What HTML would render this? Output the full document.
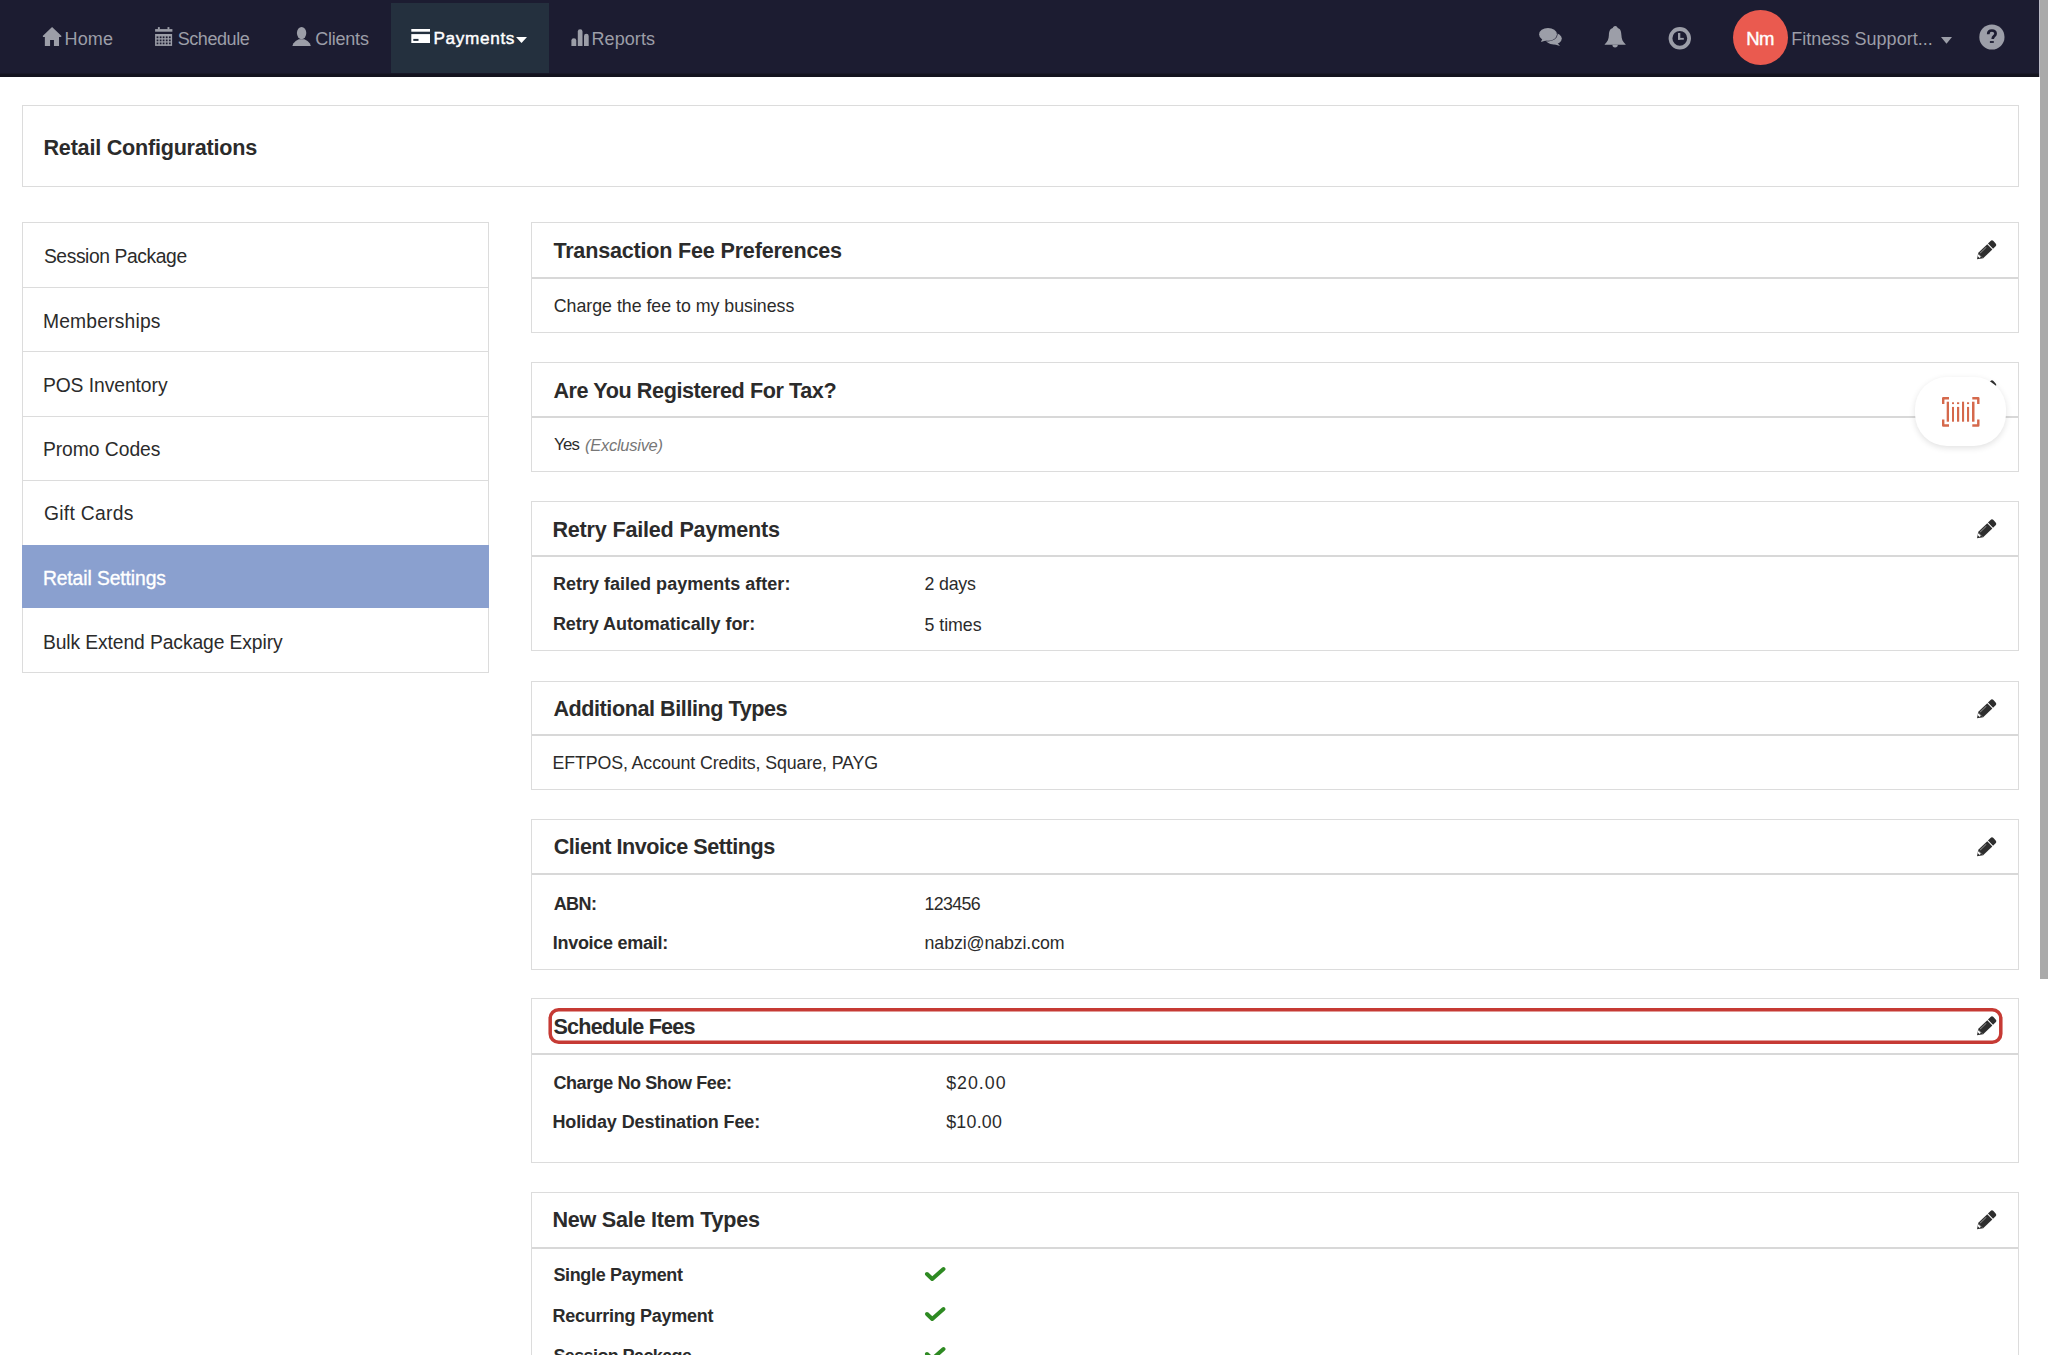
<!DOCTYPE html>
<html>
<head>
<meta charset="utf-8">
<style>
html,body{margin:0;padding:0;}
body{width:2048px;height:1355px;overflow:hidden;position:relative;background:#fff;font-family:"Liberation Sans",sans-serif;color:#2b2b2b;}
.t{position:absolute;white-space:nowrap;}
.r{position:absolute;}
svg{position:absolute;overflow:visible;}
</style>
</head>
<body>
<div class="r" style="left:0px;top:0px;width:2040px;height:77px;background:#1c1c31;"></div>
<div class="r" style="left:0px;top:73px;width:2040px;height:1px;background:#181828;"></div>
<div class="r" style="left:0px;top:74px;width:2040px;height:3px;background:#13131e;"></div>
<div class="r" style="left:391px;top:3px;width:158px;height:70px;background:#24303e;"></div>
<svg style="left:42px;top:26px" width="20" height="20" viewBox="0 0 20 20"><path d="M10.06 0.9 L19.5 10.1 L19.1 11 L17.03 11 L17.03 19.9 L11.94 19.9 L11.94 13.93 L8.07 13.93 L8.07 19.9 L2.86 19.9 L2.86 11 L1.1 11 L0.7 10.1 Z" fill="#9c9ea8"/></svg>
<svg style="left:155px;top:27px" width="18" height="19" viewBox="0 0 18 19"><rect x="0.1" y="2.1" width="17.3" height="2.6" fill="#9c9ea8"/><rect x="2.9" y="0.1" width="1.9" height="2.3" fill="#9c9ea8"/><rect x="12.5" y="0.1" width="1.9" height="2.3" fill="#9c9ea8"/><rect x="0.1" y="7" width="17" height="11.9" fill="#9c9ea8"/><rect x="1.6" y="9.4" width="1.8" height="1.8" fill="#1c1c31"/><rect x="1.6" y="12.5" width="1.8" height="1.8" fill="#1c1c31"/><rect x="1.6" y="15.5" width="1.8" height="1.8" fill="#1c1c31"/><rect x="4.7" y="9.4" width="1.8" height="1.8" fill="#1c1c31"/><rect x="4.7" y="12.5" width="1.8" height="1.8" fill="#1c1c31"/><rect x="4.7" y="15.5" width="1.8" height="1.8" fill="#1c1c31"/><rect x="7.7" y="9.4" width="1.8" height="1.8" fill="#1c1c31"/><rect x="7.7" y="12.5" width="1.8" height="1.8" fill="#1c1c31"/><rect x="7.7" y="15.5" width="1.8" height="1.8" fill="#1c1c31"/><rect x="10.8" y="9.4" width="1.8" height="1.8" fill="#1c1c31"/><rect x="10.8" y="12.5" width="1.8" height="1.8" fill="#1c1c31"/><rect x="10.8" y="15.5" width="1.8" height="1.8" fill="#1c1c31"/><rect x="13.9" y="9.4" width="1.8" height="1.8" fill="#1c1c31"/><rect x="13.9" y="12.5" width="1.8" height="1.8" fill="#1c1c31"/><rect x="13.9" y="15.5" width="1.8" height="1.8" fill="#1c1c31"/></svg>
<svg style="left:292px;top:26px" width="20" height="20" viewBox="0 0 20 20"><ellipse cx="9.6" cy="7.1" rx="4.7" ry="6.1" fill="#9c9ea8"/><path d="M0.4 19.9 L1.3 17.6 Q3.3 14.6 6.8 13.3 L12.4 13.3 Q15.9 14.6 17.9 17.6 L18.8 19.9 Z" fill="#9c9ea8"/></svg>
<svg style="left:411px;top:29px" width="19" height="14" viewBox="0 0 19 14"><rect x="0.3" y="0" width="18.7" height="2.7" fill="#fff"/><rect x="0.3" y="5.1" width="18.7" height="8.9" fill="#fff"/><rect x="2.3" y="9.9" width="5.2" height="2" fill="#24303e"/></svg>
<svg style="left:516px;top:37.3px" width="11" height="6" viewBox="0 0 11 6"><path d="M0 0 L11 0 L5.5 6 Z" fill="#fff"/></svg>
<svg style="left:571px;top:29px" width="18" height="17" viewBox="0 0 18 17"><path d="M0.4 16.9 L0.4 11.6 A2.45 2.45 0 0 1 5.3 11.6 L5.3 16.9 Z" fill="#9c9ea8"/><path d="M6.8 16.9 L6.8 2.5 A2.35 2.35 0 0 1 11.5 2.5 L11.5 16.9 Z" fill="#9c9ea8"/><path d="M13 16.9 L13 7.1 A2.35 2.35 0 0 1 17.7 7.1 L17.7 16.9 Z" fill="#9c9ea8"/></svg>
<svg style="left:1538px;top:27px" width="25" height="20" viewBox="0 0 25 20"><ellipse cx="15.6" cy="11.6" rx="8.2" ry="5.9" fill="#9c9ea8"/><path d="M19 15.5 L22 18.9 L14.5 16.8 Z" fill="#9c9ea8"/><ellipse cx="10" cy="7.4" rx="9.6" ry="7" fill="#1c1c31"/><ellipse cx="10" cy="7.4" rx="8.9" ry="6.4" fill="#9c9ea8"/><path d="M4.2 12 L3 14.9 L8.6 13.3 Z" fill="#9c9ea8"/></svg>
<svg style="left:1604px;top:25px" width="22" height="24" viewBox="0 0 22 24"><path d="M11.3 1 C12.8 1 13.4 2.2 13.7 3 C16.8 3.9 17.3 7 17.4 10 C17.6 14 18.5 16.6 21.7 19.4 L21.7 19.8 L0.6 19.8 L0.6 19.4 C3.8 16.6 4.7 14 4.9 10 C5 7 5.6 3.9 8.8 3 C9.1 2.2 9.7 1 11.3 1 Z" fill="#9c9ea8"/><path d="M8.4 19.8 A2.7 2.7 0 0 0 13.8 19.8 Z" fill="#9c9ea8"/></svg>
<svg style="left:1668px;top:26px" width="24" height="25" viewBox="0 0 24 25"><circle cx="11.8" cy="12.3" r="9.3" fill="none" stroke="#9c9ea8" stroke-width="3.8"/><rect x="10" y="7" width="2.3" height="6.7" fill="#9c9ea8"/><rect x="10" y="11.9" width="5.8" height="1.8" fill="#9c9ea8"/></svg>
<div class="r" style="left:1733px;top:10px;width:55px;height:55px;border-radius:50%;background:#ea5a4f;"></div>
<svg style="left:1940.5px;top:36.5px" width="11" height="7" viewBox="0 0 11 7"><path d="M0 0 L11 0 L5.5 6.7 Z" fill="#9c9ea8"/></svg>
<svg style="left:1979px;top:24px" width="26" height="26" viewBox="0 0 26 26"><circle cx="12.9" cy="13" r="12.6" fill="#9c9ea8"/><path d="M9.2 10.2 C9.2 7.6 11 6.5 12.9 6.5 C15.1 6.5 16.6 7.8 16.6 9.7 C16.6 12 13.7 12.2 13.7 14.9" fill="none" stroke="#1c1c31" stroke-width="2.7"/><rect x="10.9" y="17.1" width="3.9" height="1.8" fill="#1c1c31"/></svg>
<div class="r" style="left:2040px;top:0px;width:8px;height:1355px;background:#ffffff;"></div>
<div class="r" style="left:2040px;top:0px;width:8px;height:979px;background:#aaaaaa;"></div>
<div class="r" style="left:2039px;top:0px;width:1px;height:77px;background:#b8b8c4;"></div>
<div class="r" style="left:22px;top:105px;width:1997px;height:82px;border:1px solid #dcdcdc;box-sizing:border-box;"></div>
<div class="r" style="left:22px;top:222px;width:467px;height:451px;border:1px solid #dcdcdc;box-sizing:border-box;"></div>
<div class="r" style="left:22px;top:287px;width:467px;height:1px;background:#dcdcdc;"></div>
<div class="r" style="left:22px;top:351px;width:467px;height:1px;background:#dcdcdc;"></div>
<div class="r" style="left:22px;top:416px;width:467px;height:1px;background:#dcdcdc;"></div>
<div class="r" style="left:22px;top:480px;width:467px;height:1px;background:#dcdcdc;"></div>
<div class="r" style="left:22px;top:545px;width:467px;height:63px;background:#8aa0cf;"></div>
<div class="r" style="left:531px;top:222px;width:1488px;height:111px;border:1px solid #dcdcdc;box-sizing:border-box;"></div>
<div class="r" style="left:532px;top:277px;width:1486px;height:2px;background:#d8d8d8;"></div>
<svg style="left:1970px;top:234.5px" width="32" height="32" viewBox="0 0 32 32"><g transform="translate(7,24.2) rotate(-44)"><path d="M0 0 L5.2 -3.65 L5.2 3.65 Z" fill="#2e2e2e"/><rect x="5" y="-3.65" width="12.8" height="7.3" fill="#2e2e2e"/><path d="M18.8 -3.65 L22.4 -3.65 Q24.4 -3.65 24.4 -1.6 L24.4 1.6 Q24.4 3.65 22.4 3.65 L18.8 3.65 Z" fill="#2e2e2e"/><rect x="6.5" y="-2.6" width="8.5" height="0.8" fill="#8a8a8a"/><path d="M2.6 -1.9 L4.4 -2.6 L4.4 1.0 L2.6 1.0 Z" fill="#ffffff"/></g></svg>
<div class="r" style="left:531px;top:362px;width:1488px;height:110px;border:1px solid #dcdcdc;box-sizing:border-box;"></div>
<div class="r" style="left:532px;top:416px;width:1486px;height:2px;background:#d8d8d8;"></div>
<svg style="left:1970px;top:374.5px" width="32" height="32" viewBox="0 0 32 32"><g transform="translate(7,24.2) rotate(-44)"><path d="M0 0 L5.2 -3.65 L5.2 3.65 Z" fill="#2e2e2e"/><rect x="5" y="-3.65" width="12.8" height="7.3" fill="#2e2e2e"/><path d="M18.8 -3.65 L22.4 -3.65 Q24.4 -3.65 24.4 -1.6 L24.4 1.6 Q24.4 3.65 22.4 3.65 L18.8 3.65 Z" fill="#2e2e2e"/><rect x="6.5" y="-2.6" width="8.5" height="0.8" fill="#8a8a8a"/><path d="M2.6 -1.9 L4.4 -2.6 L4.4 1.0 L2.6 1.0 Z" fill="#ffffff"/></g></svg>
<div class="r" style="left:531px;top:501px;width:1488px;height:150px;border:1px solid #dcdcdc;box-sizing:border-box;"></div>
<div class="r" style="left:532px;top:555px;width:1486px;height:2px;background:#d8d8d8;"></div>
<svg style="left:1970px;top:513.5px" width="32" height="32" viewBox="0 0 32 32"><g transform="translate(7,24.2) rotate(-44)"><path d="M0 0 L5.2 -3.65 L5.2 3.65 Z" fill="#2e2e2e"/><rect x="5" y="-3.65" width="12.8" height="7.3" fill="#2e2e2e"/><path d="M18.8 -3.65 L22.4 -3.65 Q24.4 -3.65 24.4 -1.6 L24.4 1.6 Q24.4 3.65 22.4 3.65 L18.8 3.65 Z" fill="#2e2e2e"/><rect x="6.5" y="-2.6" width="8.5" height="0.8" fill="#8a8a8a"/><path d="M2.6 -1.9 L4.4 -2.6 L4.4 1.0 L2.6 1.0 Z" fill="#ffffff"/></g></svg>
<div class="r" style="left:531px;top:681px;width:1488px;height:109px;border:1px solid #dcdcdc;box-sizing:border-box;"></div>
<div class="r" style="left:532px;top:734px;width:1486px;height:2px;background:#d8d8d8;"></div>
<svg style="left:1970px;top:693.5px" width="32" height="32" viewBox="0 0 32 32"><g transform="translate(7,24.2) rotate(-44)"><path d="M0 0 L5.2 -3.65 L5.2 3.65 Z" fill="#2e2e2e"/><rect x="5" y="-3.65" width="12.8" height="7.3" fill="#2e2e2e"/><path d="M18.8 -3.65 L22.4 -3.65 Q24.4 -3.65 24.4 -1.6 L24.4 1.6 Q24.4 3.65 22.4 3.65 L18.8 3.65 Z" fill="#2e2e2e"/><rect x="6.5" y="-2.6" width="8.5" height="0.8" fill="#8a8a8a"/><path d="M2.6 -1.9 L4.4 -2.6 L4.4 1.0 L2.6 1.0 Z" fill="#ffffff"/></g></svg>
<div class="r" style="left:531px;top:819px;width:1488px;height:151px;border:1px solid #dcdcdc;box-sizing:border-box;"></div>
<div class="r" style="left:532px;top:873px;width:1486px;height:2px;background:#d8d8d8;"></div>
<svg style="left:1970px;top:831.5px" width="32" height="32" viewBox="0 0 32 32"><g transform="translate(7,24.2) rotate(-44)"><path d="M0 0 L5.2 -3.65 L5.2 3.65 Z" fill="#2e2e2e"/><rect x="5" y="-3.65" width="12.8" height="7.3" fill="#2e2e2e"/><path d="M18.8 -3.65 L22.4 -3.65 Q24.4 -3.65 24.4 -1.6 L24.4 1.6 Q24.4 3.65 22.4 3.65 L18.8 3.65 Z" fill="#2e2e2e"/><rect x="6.5" y="-2.6" width="8.5" height="0.8" fill="#8a8a8a"/><path d="M2.6 -1.9 L4.4 -2.6 L4.4 1.0 L2.6 1.0 Z" fill="#ffffff"/></g></svg>
<div class="r" style="left:531px;top:998px;width:1488px;height:165px;border:1px solid #dcdcdc;box-sizing:border-box;"></div>
<div class="r" style="left:532px;top:1053px;width:1486px;height:2px;background:#d8d8d8;"></div>
<svg style="left:1970px;top:1010.5px" width="32" height="32" viewBox="0 0 32 32"><g transform="translate(7,24.2) rotate(-44)"><path d="M0 0 L5.2 -3.65 L5.2 3.65 Z" fill="#2e2e2e"/><rect x="5" y="-3.65" width="12.8" height="7.3" fill="#2e2e2e"/><path d="M18.8 -3.65 L22.4 -3.65 Q24.4 -3.65 24.4 -1.6 L24.4 1.6 Q24.4 3.65 22.4 3.65 L18.8 3.65 Z" fill="#2e2e2e"/><rect x="6.5" y="-2.6" width="8.5" height="0.8" fill="#8a8a8a"/><path d="M2.6 -1.9 L4.4 -2.6 L4.4 1.0 L2.6 1.0 Z" fill="#ffffff"/></g></svg>
<svg style="left:540px;top:1000px" width="1470" height="52" viewBox="0 0 1470 52"><rect x="10.2" y="9.7" width="1450.6" height="32.5" rx="8.5" ry="8.5" fill="none" stroke="#c63a34" stroke-width="3.5"/></svg>
<div class="r" style="left:531px;top:1192px;width:1488px;height:208px;border:1px solid #dcdcdc;box-sizing:border-box;"></div>
<div class="r" style="left:532px;top:1247px;width:1486px;height:2px;background:#d8d8d8;"></div>
<svg style="left:1970px;top:1204.5px" width="32" height="32" viewBox="0 0 32 32"><g transform="translate(7,24.2) rotate(-44)"><path d="M0 0 L5.2 -3.65 L5.2 3.65 Z" fill="#2e2e2e"/><rect x="5" y="-3.65" width="12.8" height="7.3" fill="#2e2e2e"/><path d="M18.8 -3.65 L22.4 -3.65 Q24.4 -3.65 24.4 -1.6 L24.4 1.6 Q24.4 3.65 22.4 3.65 L18.8 3.65 Z" fill="#2e2e2e"/><rect x="6.5" y="-2.6" width="8.5" height="0.8" fill="#8a8a8a"/><path d="M2.6 -1.9 L4.4 -2.6 L4.4 1.0 L2.6 1.0 Z" fill="#ffffff"/></g></svg>
<svg style="left:925px;top:1267px" width="21" height="15" viewBox="0 0 21 15"><polyline points="2,7 7.2,12 18.5,2" fill="none" stroke="#2e8a22" stroke-width="4" stroke-linecap="round" stroke-linejoin="round"/></svg>
<svg style="left:925px;top:1307px" width="21" height="15" viewBox="0 0 21 15"><polyline points="2,7 7.2,12 18.5,2" fill="none" stroke="#2e8a22" stroke-width="4" stroke-linecap="round" stroke-linejoin="round"/></svg>
<svg style="left:925px;top:1347.2px" width="21" height="15" viewBox="0 0 21 15"><polyline points="2,7 7.2,12 18.5,2" fill="none" stroke="#2e8a22" stroke-width="4" stroke-linecap="round" stroke-linejoin="round"/></svg>
<div class="t" style="left:64.60px;top:29.56px;font-size:18px;line-height:18px;font-weight:normal;font-style:normal;color:#9c9ea8;letter-spacing:0.099px;">Home</div>
<div class="t" style="left:177.70px;top:29.56px;font-size:18px;line-height:18px;font-weight:normal;font-style:normal;color:#9c9ea8;letter-spacing:-0.421px;">Schedule</div>
<div class="t" style="left:315.20px;top:29.56px;font-size:18px;line-height:18px;font-weight:normal;font-style:normal;color:#9c9ea8;letter-spacing:-0.220px;">Clients</div>
<div class="t" style="left:433.50px;top:30.04px;font-size:17.2px;line-height:17.2px;font-weight:normal;font-style:normal;color:#ffffff;letter-spacing:0.639px;-webkit-text-stroke:0.45px #fff">Payments</div>
<div class="t" style="left:591.50px;top:29.56px;font-size:18px;line-height:18px;font-weight:normal;font-style:normal;color:#9c9ea8;letter-spacing:0.079px;">Reports</div>
<div class="t" style="left:1746.30px;top:29.64px;font-size:18.5px;line-height:18.5px;font-weight:normal;font-style:normal;color:#ffffff;letter-spacing:-0.560px;-webkit-text-stroke:0.4px #fff">Nm</div>
<div class="t" style="left:1791.20px;top:29.66px;font-size:18px;line-height:18px;font-weight:normal;font-style:normal;color:#9c9ea8;letter-spacing:0.032px;">Fitness Support...</div>
<div class="t" style="left:43.50px;top:136.52px;font-size:21.6px;line-height:21.6px;font-weight:bold;font-style:normal;color:#2b2b2b;letter-spacing:-0.232px;">Retail Configurations</div>
<div class="t" style="left:43.90px;top:247.26px;font-size:19.3px;line-height:19.3px;font-weight:normal;font-style:normal;color:#2b2b2b;letter-spacing:-0.412px;">Session Package</div>
<div class="t" style="left:42.90px;top:311.56px;font-size:19.3px;line-height:19.3px;font-weight:normal;font-style:normal;color:#2b2b2b;letter-spacing:0.182px;">Memberships</div>
<div class="t" style="left:42.90px;top:375.86px;font-size:19.3px;line-height:19.3px;font-weight:normal;font-style:normal;color:#2b2b2b;letter-spacing:-0.062px;">POS Inventory</div>
<div class="t" style="left:42.90px;top:440.16px;font-size:19.3px;line-height:19.3px;font-weight:normal;font-style:normal;color:#2b2b2b;letter-spacing:-0.034px;">Promo Codes</div>
<div class="t" style="left:43.90px;top:504.46px;font-size:19.3px;line-height:19.3px;font-weight:normal;font-style:normal;color:#2b2b2b;letter-spacing:0.306px;">Gift Cards</div>
<div class="t" style="left:42.90px;top:568.76px;font-size:19.3px;line-height:19.3px;font-weight:normal;font-style:normal;color:#ffffff;letter-spacing:-0.091px;-webkit-text-stroke:0.35px #fff">Retail Settings</div>
<div class="t" style="left:42.90px;top:633.06px;font-size:19.3px;line-height:19.3px;font-weight:normal;font-style:normal;color:#2b2b2b;letter-spacing:-0.099px;">Bulk Extend Package Expiry</div>
<div class="t" style="left:553.40px;top:239.72px;font-size:21.6px;line-height:21.6px;font-weight:bold;font-style:normal;color:#2b2b2b;letter-spacing:-0.209px;">Transaction Fee Preferences</div>
<div class="t" style="left:553.80px;top:298.13px;font-size:17.8px;line-height:17.8px;font-weight:normal;font-style:normal;color:#2b2b2b;letter-spacing:-0.024px;">Charge the fee to my business</div>
<div class="t" style="left:553.40px;top:379.52px;font-size:21.6px;line-height:21.6px;font-weight:bold;font-style:normal;color:#2b2b2b;letter-spacing:-0.415px;">Are You Registered For Tax?</div>
<div class="t" style="left:553.90px;top:436.78px;font-size:16.8px;line-height:16.8px;font-weight:normal;font-style:normal;color:#2b2b2b;letter-spacing:-0.642px;">Yes</div>
<div class="t" style="left:585.10px;top:437.03px;font-size:16.5px;line-height:16.5px;font-weight:normal;font-style:italic;color:#777777;letter-spacing:-0.278px;">(Exclusive)</div>
<div class="t" style="left:552.40px;top:518.72px;font-size:21.6px;line-height:21.6px;font-weight:bold;font-style:normal;color:#2b2b2b;letter-spacing:-0.201px;">Retry Failed Payments</div>
<div class="t" style="left:552.90px;top:574.76px;font-size:18px;line-height:18px;font-weight:bold;font-style:normal;color:#2b2b2b;letter-spacing:0.015px;">Retry failed payments after:</div>
<div class="t" style="left:924.60px;top:575.93px;font-size:17.8px;line-height:17.8px;font-weight:normal;font-style:normal;color:#2b2b2b;letter-spacing:-0.220px;">2 days</div>
<div class="t" style="left:552.90px;top:615.46px;font-size:18px;line-height:18px;font-weight:bold;font-style:normal;color:#2b2b2b;letter-spacing:-0.041px;">Retry Automatically for:</div>
<div class="t" style="left:924.60px;top:616.63px;font-size:17.8px;line-height:17.8px;font-weight:normal;font-style:normal;color:#2b2b2b;letter-spacing:-0.053px;">5 times</div>
<div class="t" style="left:553.40px;top:697.72px;font-size:21.6px;line-height:21.6px;font-weight:bold;font-style:normal;color:#2b2b2b;letter-spacing:-0.440px;">Additional Billing Types</div>
<div class="t" style="left:552.40px;top:755.43px;font-size:17.8px;line-height:17.8px;font-weight:normal;font-style:normal;color:#2b2b2b;letter-spacing:-0.102px;">EFTPOS, Account Credits, Square, PAYG</div>
<div class="t" style="left:553.70px;top:836.22px;font-size:21.6px;line-height:21.6px;font-weight:bold;font-style:normal;color:#2b2b2b;letter-spacing:-0.457px;">Client Invoice Settings</div>
<div class="t" style="left:553.70px;top:894.56px;font-size:18px;line-height:18px;font-weight:bold;font-style:normal;color:#2b2b2b;letter-spacing:-0.566px;">ABN:</div>
<div class="t" style="left:924.60px;top:895.73px;font-size:17.8px;line-height:17.8px;font-weight:normal;font-style:normal;color:#2b2b2b;letter-spacing:-0.649px;">123456</div>
<div class="t" style="left:552.70px;top:934.16px;font-size:18px;line-height:18px;font-weight:bold;font-style:normal;color:#2b2b2b;letter-spacing:-0.273px;">Invoice email:</div>
<div class="t" style="left:924.60px;top:935.33px;font-size:17.8px;line-height:17.8px;font-weight:normal;font-style:normal;color:#2b2b2b;letter-spacing:-0.120px;">nabzi@nabzi.com</div>
<div class="t" style="left:553.40px;top:1016.22px;font-size:21.6px;line-height:21.6px;font-weight:bold;font-style:normal;color:#2b2b2b;letter-spacing:-0.751px;">Schedule Fees</div>
<div class="t" style="left:553.40px;top:1073.86px;font-size:18px;line-height:18px;font-weight:bold;font-style:normal;color:#2b2b2b;letter-spacing:-0.413px;">Charge No Show Fee:</div>
<div class="t" style="left:946.20px;top:1075.03px;font-size:17.8px;line-height:17.8px;font-weight:normal;font-style:normal;color:#2b2b2b;letter-spacing:1.001px;">$20.00</div>
<div class="t" style="left:552.40px;top:1112.96px;font-size:18px;line-height:18px;font-weight:bold;font-style:normal;color:#2b2b2b;letter-spacing:-0.093px;">Holiday Destination Fee:</div>
<div class="t" style="left:946.20px;top:1114.13px;font-size:17.8px;line-height:17.8px;font-weight:normal;font-style:normal;color:#2b2b2b;letter-spacing:0.261px;">$10.00</div>
<div class="t" style="left:552.40px;top:1209.02px;font-size:21.6px;line-height:21.6px;font-weight:bold;font-style:normal;color:#2b2b2b;letter-spacing:-0.245px;">New Sale Item Types</div>
<div class="t" style="left:553.40px;top:1266.46px;font-size:18px;line-height:18px;font-weight:bold;font-style:normal;color:#2b2b2b;letter-spacing:-0.342px;">Single Payment</div>
<div class="t" style="left:552.40px;top:1306.66px;font-size:18px;line-height:18px;font-weight:bold;font-style:normal;color:#2b2b2b;letter-spacing:-0.247px;">Recurring Payment</div>
<div class="t" style="left:553.40px;top:1346.86px;font-size:18px;line-height:18px;font-weight:bold;font-style:normal;color:#2b2b2b;letter-spacing:-0.605px;">Session Package</div>
<div class="r" style="left:1915px;top:377px;width:91px;height:69px;border-radius:32px;background:#fff;box-shadow:0 2px 6px rgba(0,0,0,0.12);"></div>
<svg style="left:1942px;top:397px" width="38" height="30" viewBox="0 0 38 30"><path d="M7 1.2 L1.2 1.2 L1.2 7" fill="none" stroke="#d5694c" stroke-width="2.4" stroke-linejoin="round"/><path d="M30.3 1.2 L36.3 1.2 L36.3 7" fill="none" stroke="#d5694c" stroke-width="2.4" stroke-linejoin="round"/><path d="M1.2 22.4 L1.2 28.5 L7 28.5" fill="none" stroke="#d5694c" stroke-width="2.4" stroke-linejoin="round"/><path d="M36.3 22.4 L36.3 28.5 L30.3 28.5" fill="none" stroke="#d5694c" stroke-width="2.4" stroke-linejoin="round"/><rect x="4.7" y="4.7" width="2.3" height="20" fill="#d5694c"/><rect x="10" y="5.3" width="2.0" height="1.8" fill="#d5694c"/><rect x="10" y="9.9" width="2.0" height="14.8" fill="#d5694c"/><rect x="15" y="5.3" width="2.2" height="1.8" fill="#d5694c"/><rect x="15" y="9.9" width="2.2" height="14.8" fill="#d5694c"/><rect x="20" y="4.7" width="2.1" height="20" fill="#d5694c"/><rect x="25" y="5.3" width="2.1" height="1.8" fill="#d5694c"/><rect x="25" y="9.9" width="2.1" height="14.8" fill="#d5694c"/><rect x="30" y="4.7" width="2.5" height="20" fill="#d5694c"/></svg>
</body>
</html>
